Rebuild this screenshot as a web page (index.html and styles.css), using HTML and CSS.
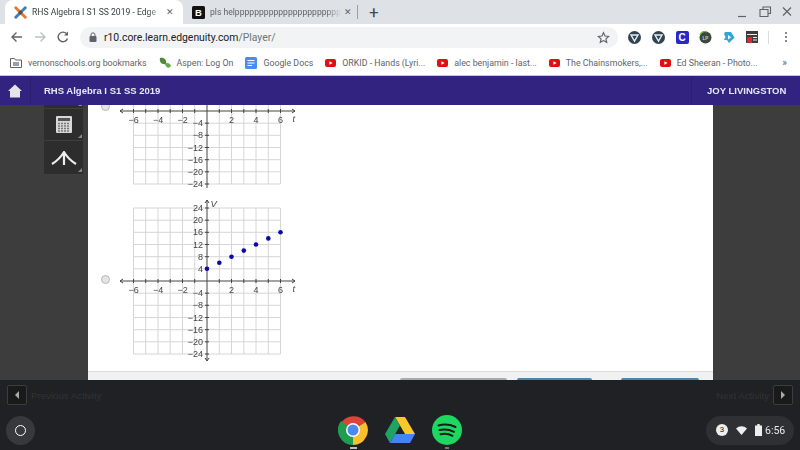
FILE: index.html
```html
<!DOCTYPE html>
<html lang="en">
<head>
    <meta charset="UTF-8" />
    <title>RHS Algebra I S1 SS 2019 - Edgenuity</title>
    <link rel="stylesheet" href="styles.css">
</head>
<body>

<svg class="defs" width="0" height="0">
    <defs>
        <!-- yt bookmark icon -->
        <g id="yt">
            <rect x="0" y="0" width="11" height="8" rx="2" fill="#e01010"/>
            <path d="M4.4 2.2 L7.6 4 L4.4 5.8 Z" fill="#fff"/>
        </g>
        <!-- shield extension icon -->
        <g id="shield">
            <circle cx="6.5" cy="6.5" r="6.5" fill="#2f4450"/>
            <path d="M3 4 H10 L6.5 10 Z" fill="none" stroke="#e8eef0" stroke-width="1.4"/>
        </g>
        <!-- coordinate plane, origin at 0,0 -->
        <g id="plane">
            <path class="grid" d="M-73.5 -73H73.5M-73.5 -60.8H73.5M-73.5 -48.7H73.5M-73.5 -36.5H73.5M-73.5 -24.3H73.5M-73.5 -12.2H73.5M-73.5 12.2H73.5M-73.5 24.3H73.5M-73.5 36.5H73.5M-73.5 48.7H73.5M-73.5 60.8H73.5M-73.5 73H73.5"/>
            <path class="grid" d="M-73.5 -73V73M-61.3 -73V73M-49 -73V73M-36.8 -73V73M-24.5 -73V73M-12.3 -73V73M12.3 -73V73M24.5 -73V73M36.8 -73V73M49 -73V73M61.3 -73V73M73.5 -73V73"/>
            <path class="axis" d="M-87 0H88M0 -81V80"/>
            <path class="axis" d="M-84 -2L-87 0L-84 2M85 -2L88 0L85 2M-2 -78L0 -81L2 -78M-2 77L0 80L2 77"/>
            <path class="axis" d="M-73.5 -2V2M-61.3 -2V2M-49 -2V2M-36.8 -2V2M-24.5 -2V2M-12.3 -2V2M12.3 -2V2M24.5 -2V2M36.8 -2V2M49 -2V2M61.3 -2V2M73.5 -2V2"/>
            <path class="axis" d="M-2 -73H2M-2 -60.8H2M-2 -48.7H2M-2 -36.5H2M-2 -24.3H2M-2 -12.2H2M-2 12.2H2M-2 24.3H2M-2 36.5H2M-2 48.7H2M-2 60.8H2M-2 73H2"/>
            <g class="xnums">
                <text x="-73.5" y="12">−6</text>
                <text x="-49" y="12">−4</text>
                <text x="-24.5" y="12">−2</text>
                <text x="24.5" y="12">2</text>
                <text x="49" y="12">4</text>
                <text x="73.5" y="12">6</text>
            </g>
            <g class="ynums">
                <text x="-4" y="-70">24</text>
                <text x="-4" y="-57.8">20</text>
                <text x="-4" y="-45.7">16</text>
                <text x="-4" y="-33.5">12</text>
                <text x="-4" y="-21.3">8</text>
                <text x="-4" y="-9.2">4</text>
                <text x="-4" y="15.2">−4</text>
                <text x="-4" y="27.3">−8</text>
                <text x="-4" y="39.5">−12</text>
                <text x="-4" y="51.7">−16</text>
                <text x="-4" y="63.8">−20</text>
                <text x="-4" y="76">−24</text>
            </g>
            <text class="varname" x="85.5" y="11">t</text>
            <text class="varname big" x="3.5" y="-74">V</text>
        </g>
    </defs>
</svg>

<div class="tabstrip">
    <div class="tab active">
        <svg class="favicon" width="13" height="13" viewBox="0 0 14 14">
            <path d="M1 1 L13 13" stroke="#e8762c" stroke-width="3"/>
            <path d="M13 1 L1 13" stroke="#3d7fb8" stroke-width="3"/>
            <path d="M4.5 7 L7 4.5 L9.5 7 L7 9.5 Z" fill="#5a4a3a"/>
        </svg>
        <span class="tab-title">RHS Algebra I S1 SS 2019 - Edge</span>
        <span class="tab-x">✕</span>
    </div>
    <div class="tab">
        <svg class="favicon" width="13" height="13" viewBox="0 0 13 13">
            <rect width="13" height="13" rx="1.5" fill="#111"/>
            <text class="b-glyph" x="6.5" y="10">B</text>
        </svg>
        <span class="tab-title">pls helpppppppppppppppppppppp</span>
        <span class="tab-x">✕</span>
    </div>
    <div class="tab-sep"></div>
    <div class="tab-plus">+</div>
    <div class="win-controls">
        <svg width="60" height="14" viewBox="0 0 60 14">
            <path d="M3 11.5 H11" stroke="#5f6368" stroke-width="1.2"/>
            <path d="M25 4.5 H33 V11.5 H25 Z M28 4 V2 H35.5 V8.5 H33" fill="none" stroke="#5f6368" stroke-width="1.1"/>
            <path d="M48 2.5 L56 10.5 M56 2.5 L48 10.5" stroke="#5f6368" stroke-width="1.2"/>
        </svg>
    </div>
</div>

<div class="toolbar">
    <svg class="nav-icon" width="14" height="14" viewBox="0 0 14 14"><path d="M12 7 H2 M6.5 2.5 L2 7 L6.5 11.5" fill="none" stroke="#5f6368" stroke-width="1.4"/></svg>
    <svg class="nav-icon" width="14" height="14" viewBox="0 0 14 14"><path d="M2 7 H12 M7.5 2.5 L12 7 L7.5 11.5" fill="none" stroke="#bdc1c6" stroke-width="1.4"/></svg>
    <svg class="nav-icon" width="14" height="14" viewBox="0 0 14 14"><path d="M11.5 8.5 A4.8 4.8 0 1 1 10.4 3.6" fill="none" stroke="#5f6368" stroke-width="1.4"/><path d="M12 1.5 V5.5 H8 Z" fill="#5f6368"/></svg>
    <div class="omnibox">
        <svg width="8" height="10" viewBox="0 0 8 10"><rect x="0.5" y="4" width="7" height="6" rx="1" fill="#5f6368"/><path d="M2 4.5 V2.8 A2 2 0 0 1 6 2.8 V4.5" fill="none" stroke="#5f6368" stroke-width="1"/></svg>
        <span class="url">r10.core.learn.edgenuity.com<span class="url-path">/Player/</span></span>
        <svg class="star" width="13" height="13" viewBox="0 0 24 24"><path d="M12 3 L14.8 9.2 L21.5 10 L16.5 14.5 L17.9 21 L12 17.7 L6.1 21 L7.5 14.5 L2.5 10 L9.2 9.2 Z" fill="none" stroke="#5f6368" stroke-width="2.2"/></svg>
    </div>
    <div class="extensions">
        <svg width="13" height="13" viewBox="0 0 13 13"><use href="#shield"/></svg>
        <svg width="13" height="13" viewBox="0 0 13 13"><use href="#shield"/></svg>
        <div class="ext-c">C</div>
        <svg width="13" height="13" viewBox="0 0 13 13"><circle cx="6.5" cy="6.5" r="6" fill="#3a4a40"/><path d="M1 4 A6 6 0 0 1 8 .7" fill="none" stroke="#7cb342" stroke-width="1.4"/><text class="lp-glyph" x="6.5" y="8.5">LP</text></svg>
        <svg width="12" height="13" viewBox="0 0 12 13"><path d="M2 1 H8 L11.5 6.5 L6 12 L4 9 H1 L2.5 6 L1 3 Z" fill="#2fa8d8"/><path d="M5 4 L8 6.3 L5 8.5 Z" fill="#fff"/></svg>
        <svg width="12" height="12" viewBox="0 0 12 12"><rect width="12" height="12" fill="#3c3c3c"/><rect x="1" y="6" width="5" height="6" fill="#d92b2b"/><path d="M1 3.5 H11 M7 6.5 H11 M7 9 H11" stroke="#eee" stroke-width="1"/></svg>
    </div>
    <div class="tool-sep"></div>
    <div class="menu-dots"><i></i><i></i><i></i></div>
</div>

<div class="bookmarks">
    <div class="bm">
        <svg width="12" height="10" viewBox="0 0 12 10"><path d="M.5 .5 H4.5 L5.5 2 H11.5 V9.5 H.5 Z" fill="none" stroke="#5f6368" stroke-width="1"/><rect x="3" y="4" width="6" height="4" fill="#9aa0a6"/></svg>
        <span>vernonschools.org bookmarks</span>
    </div>
    <div class="bm">
        <svg width="12" height="12" viewBox="0 0 12 12"><path d="M1 1 C5 0 8 3 7 7 C3 8 0 5 1 1 Z" fill="#4e8a34"/><path d="M6 7 C8 5 11 6 12 9 C10 12 7 11 6 7 Z" fill="#6aa84f"/></svg>
        <span>Aspen: Log On</span>
    </div>
    <div class="bm">
        <svg width="12" height="12" viewBox="0 0 12 12"><rect width="12" height="12" rx="1.5" fill="#4a8cf0"/><path d="M2.5 3.5 H9.5 M2.5 6 H9.5 M2.5 8.5 H7" stroke="#fff" stroke-width="1.1"/></svg>
        <span>Google Docs</span>
    </div>
    <div class="bm">
        <svg width="11" height="8" viewBox="0 0 11 8"><use href="#yt"/></svg>
        <span>ORKID - Hands (Lyri...</span>
    </div>
    <div class="bm">
        <svg width="11" height="8" viewBox="0 0 11 8"><use href="#yt"/></svg>
        <span>alec benjamin - last...</span>
    </div>
    <div class="bm">
        <svg width="11" height="8" viewBox="0 0 11 8"><use href="#yt"/></svg>
        <span>The Chainsmokers,...</span>
    </div>
    <div class="bm">
        <svg width="11" height="8" viewBox="0 0 11 8"><use href="#yt"/></svg>
        <span>Ed Sheeran - Photo...</span>
    </div>
    <div class="bm-more">»</div>
</div>

<div class="course-bar">
    <div class="home-btn">
        <svg width="14" height="14" viewBox="0 0 14 14"><path d="M7 .5 L14 7 H12 V13.5 H2 V7 H0 Z" fill="#e4e4ea"/></svg>
    </div>
    <div class="course-title">RHS Algebra I S1 SS 2019</div>
    <div class="student-name">JOY LIVINGSTON</div>
</div>

<div class="player">
    <div class="side-left">
        <div class="tools">
            <div class="tool-btn tool-first"><i class="corner"></i></div>
            <div class="tool-btn tool-calc">
                <svg width="16" height="17" viewBox="0 0 16 17">
                    <rect width="16" height="17" rx="1" fill="#d8d8d8"/>
                    <rect x="2" y="2" width="12" height="3" fill="#555"/>
                    <path d="M2 7.5 H14 M2 10 H14 M2 12.5 H14 M2 15 H14" stroke="#777" stroke-width="1.4" stroke-dasharray="2 1"/>
                </svg>
                <i class="corner"></i>
            </div>
            <div class="tool-btn tool-arrow">
                <svg width="26" height="14" viewBox="0 0 26 14">
                    <path d="M1 13 C6 10 10 6 13 1 C16 6 20 10 25 13 M13 1 V14" fill="none" stroke="#eee" stroke-width="2.2"/>
                </svg>
                <i class="corner"></i>
            </div>
        </div>
    </div>

    <div class="content">
        <div class="answer answer-cut">
            <div class="radio"></div>
            <svg class="graph" width="200" height="83" viewBox="-99 -6 200 83"><use href="#plane"/></svg>
        </div>
        <div class="answer answer-full">
            <div class="radio"></div>
            <svg class="graph" width="200" height="170" viewBox="-99 -85 200 170">
                <use href="#plane"/>
                <g class="dots">
                    <circle cx="0" cy="-12.2" r="2.3"/>
                    <circle cx="12.3" cy="-18.3" r="2.3"/>
                    <circle cx="24.5" cy="-24.3" r="2.3"/>
                    <circle cx="36.8" cy="-30.4" r="2.3"/>
                    <circle cx="49" cy="-36.5" r="2.3"/>
                    <circle cx="61.3" cy="-42.6" r="2.3"/>
                    <circle cx="73.5" cy="-48.7" r="2.3"/>
                </g>
            </svg>
        </div>
        <div class="btn-row">
            <div class="peek peek-grey"></div>
            <div class="peek peek-blue peek-mid"></div>
            <div class="peek peek-blue peek-last"></div>
        </div>
    </div>

    <div class="side-right"></div>
</div>

<div class="shelf">
    <div class="activity-row">
        <div class="act-btn"><i class="tri-left"></i></div>
        <span class="act-label">Previous Activity</span>
        <span class="act-label act-next">Next Activity</span>
        <div class="act-btn"><i class="tri-right"></i></div>
    </div>
    <div class="launcher-row">
        <div class="launcher-slot"><div class="launcher"><i></i></div></div>
        <div class="apps">
            <div class="app">
                <svg width="30" height="30" viewBox="0 0 30 30">
                    <path d="M15 15 L3 8 A15 15 0 0 1 27.5 7 Z" fill="#dc4437"/>
                    <path d="M15 15 L27.5 7 A15 15 0 0 1 15 30 Z" fill="#fbc02d"/>
                    <path d="M15 15 L15 30 A15 15 0 0 1 3 6 Z" fill="#1f9e50"/>
                    <circle cx="15" cy="15" r="7" fill="#fff"/>
                    <circle cx="15" cy="15" r="5.5" fill="#4b89f0"/>
                </svg>
                <i class="running"></i>
            </div>
            <div class="app">
                <svg width="30" height="28" viewBox="0 0 30 28">
                    <path d="M10 1 H20 L30 18 H20 Z" fill="#f9c82d"/>
                    <path d="M10 1 L15 9.5 L5 27 L0 18 Z" fill="#1fa463"/>
                    <path d="M10 18 H30 L25 27 H5 Z" fill="#4285f4"/>
                </svg>
            </div>
            <div class="app">
                <svg width="30" height="30" viewBox="0 0 30 30">
                    <circle cx="15" cy="15" r="15" fill="#1ed760"/>
                    <path d="M6.5 10.5 C12 9 18 9.5 23.5 12 M7.5 15 C12 14 17.5 14.5 22 16.8 M8.5 19.2 C12.5 18.4 17 18.8 20.5 20.8" fill="none" stroke="#1b1b1b" stroke-width="2" stroke-linecap="round"/>
                </svg>
                <i class="running running-small"></i>
            </div>
        </div>
        <div class="tray-slot">
            <div class="tray">
                <span class="badge">3</span>
                <svg width="11" height="9" viewBox="0 0 11 9"><path d="M0 2.5 A8 8 0 0 1 11 2.5 L5.5 9 Z" fill="#eee"/></svg>
                <svg width="7" height="12" viewBox="0 0 7 12"><path d="M2.3 0 H4.7 V1.5 H7 V12 H0 V1.5 H2.3 Z" fill="#eee"/></svg>
                <span class="clock">6:56</span>
            </div>
        </div>
    </div>
</div>

</body>
</html>
```
FILE: styles.css
```css
* {
    box-sizing: border-box;
}

body {
    margin: 0;
    width: 800px;
    height: 450px;
    overflow: hidden;
    display: flex;
    flex-direction: column;
    font-family: 'Roboto', 'Liberation Sans', sans-serif;
    background-color: #202124;
    filter: blur(0.35px);
}

.defs {
    position: absolute;
}

/* browser tabs */
.tabstrip {
    height: 24px;
    flex: none;
    display: flex;
    align-items: center;
    background-color: #dee1e6;
    padding-left: 5px;
}

.tab {
    width: 178px;
    height: 24px;
    display: flex;
    align-items: center;
    padding: 0 7px 0 9px;
    font-size: 8.6px;
    color: #5f6368;
    flex: none;
}

.tab.active {
    background: white;
    border-radius: 8px 8px 0 0;
    color: #3c4043;
}

.favicon {
    flex: none;
    margin-right: 5px;
}

.b-glyph {
    font: bold 9.5px 'Liberation Sans', sans-serif;
    fill: white;
    text-anchor: middle;
}

.tab-title {
    flex: 1;
    overflow: hidden;
    white-space: nowrap;
    -webkit-mask-image: linear-gradient(to right, #000 88%, transparent);
    mask-image: linear-gradient(to right, #000 88%, transparent);
}

.tab-x {
    font-size: 9px;
    width: 12px;
    text-align: center;
    color: #5f6368;
}

.tab-sep {
    width: 1px;
    height: 14px;
    background-color: #9aa0a6;
    margin-left: -4px;
}

.tab-plus {
    font-size: 17px;
    color: #45494e;
    margin-left: 11px;
}

.win-controls {
    margin-left: auto;
    margin-right: 5px;
    display: flex;
}

/* url row */
.toolbar {
    height: 26px;
    flex: none;
    display: flex;
    align-items: center;
    background: white;
    padding-left: 10px;
}

.nav-icon {
    margin-right: 9px;
    flex: none;
}

.omnibox {
    width: 538px;
    height: 21px;
    margin-left: 1px;
    border-radius: 11px;
    background-color: #f1f3f4;
    display: flex;
    align-items: center;
    padding: 0 8px 0 9px;
}

.url {
    margin-left: 7px;
    font-size: 10.4px;
    color: #202124;
}

.url-path {
    color: #6f7377;
}

.star {
    margin-left: auto;
}

.extensions {
    display: flex;
    align-items: center;
    width: 130px;
    justify-content: space-between;
    margin-left: 10px;
    flex: none;
}

.ext-c {
    width: 13px;
    height: 13px;
    border-radius: 2px;
    background-color: #2a27c4;
    color: white;
    font: bold 10px/13px 'Liberation Sans', sans-serif;
    text-align: center;
}

.lp-glyph {
    font: bold 4.5px 'Liberation Sans', sans-serif;
    fill: #c8d6c0;
    text-anchor: middle;
}

.tool-sep {
    width: 1px;
    height: 13px;
    background-color: #dadce0;
    margin-left: 10px;
    flex: none;
}

.menu-dots {
    margin-left: 16px;
    display: flex;
    flex-direction: column;
    gap: 2px;
}

.menu-dots i {
    width: 2px;
    height: 2px;
    background-color: #5f6368;
    border-radius: 50%;
}

/* bookmarks */
.bookmarks {
    height: 26px;
    flex: none;
    display: flex;
    align-items: center;
    background: white;
    padding-left: 10px;
    font-size: 8.8px;
    color: #5f6368;
    border-bottom: 1px solid #c9c9d4;
}

.bm {
    display: flex;
    align-items: center;
    gap: 6px;
    margin-right: 12px;
    white-space: nowrap;
}

.bm-more {
    margin-left: auto;
    margin-right: 13px;
    font-size: 10px;
}

/* edgenuity header */
.course-bar {
    height: 29px;
    flex: none;
    display: flex;
    align-items: center;
    background-color: #31237f;
    color: #e8e8f2;
    font-family: 'Liberation Sans', Arial, sans-serif;
    font-weight: bold;
    font-size: 9.5px;
}

.home-btn {
    width: 31px;
    height: 100%;
    display: flex;
    align-items: center;
    justify-content: center;
    border-right: 1px solid #2a1e70;
}

.course-title {
    margin-left: 13px;
}

.student-name {
    margin-left: auto;
    height: 100%;
    width: 109px;
    padding-left: 15px;
    line-height: 29px;
    border-left: 1px solid #2a1e70;
}

/* player area */
.player {
    height: 275px;
    flex: none;
    display: flex;
    overflow: hidden;
}

.side-left {
    width: 88px;
    flex: none;
    background-color: #3d3d3d;
    padding-left: 44px;
}

.side-right {
    flex: 1;
    background-color: #3d3d3d;
}

.tools {
    width: 39px;
}

.tool-btn {
    background-color: #2d2d2d;
    border-bottom: 1px solid #3f3f3f;
    display: flex;
    align-items: center;
    justify-content: center;
    position: relative;
}

.tool-first {
    height: 4px;
}

.tool-calc {
    height: 32px;
}

.tool-arrow {
    height: 34px;
}

.corner {
    position: absolute;
    right: 1px;
    bottom: 2px;
    width: 0;
    height: 0;
    border-left: 4px solid transparent;
    border-bottom: 4px solid #8a8a8a;
}

.content {
    width: 625px;
    flex: none;
    background: white;
    display: flex;
    flex-direction: column;
}

.answer {
    display: flex;
    position: relative;
    padding-left: 13px;
}

.answer-cut {
    height: 85px;
    align-items: flex-start;
}

.answer-full {
    align-items: center;
    margin-top: 6px;
    height: 170px;
}

.answer-cut .radio {
    margin-top: -3px;
}

.answer-full .radio {
    margin-top: -4px;
}

.radio {
    width: 9px;
    height: 9px;
    flex: none;
    border-radius: 50%;
    background-color: #e4e4e4;
    border: 1px solid #b9b9b9;
}

.graph {
    flex: none;
    margin-left: -2px;
}

.grid {
    stroke: #d6d6d6;
    stroke-width: 1;
    fill: none;
}

.axis {
    stroke: #444;
    stroke-width: 1;
    fill: none;
}

.xnums text,
.ynums text {
    font-family: 'Liberation Sans', Arial, sans-serif;
    font-size: 9px;
    fill: #444;
}

.xnums text {
    text-anchor: middle;
}

.ynums text {
    text-anchor: end;
}

.varname {
    font-family: 'Liberation Serif', serif;
    font-style: italic;
    font-size: 10px;
    fill: #444;
}

.varname.big {
    font-family: 'Liberation Sans', sans-serif;
    font-size: 9.5px;
}

.dots circle {
    fill: #0a0aa8;
}

.btn-row {
    flex: 1;
    margin-top: 5px;
    background-color: #f1f1f1;
    border-top: 1px solid #dcdcdc;
    display: flex;
    align-items: flex-end;
    padding-left: 312px;
}

.peek {
    height: 2px;
    border-radius: 3px 3px 0 0;
}

.peek-grey {
    width: 107px;
    background-color: #aaa;
}

.peek-blue {
    background-color: #4f86a8;
}

.peek-mid {
    width: 75px;
    margin-left: 10px;
}

.peek-last {
    width: 78px;
    margin-left: 29px;
}

/* chromebook shelf */
.shelf {
    flex: 1;
    display: flex;
    flex-direction: column;
    background-color: #202124;
}

.activity-row {
    height: 30px;
    flex: none;
    display: flex;
    align-items: center;
    padding: 0 7px;
    font-size: 9.7px;
    color: #323336;
    font-family: 'Liberation Sans', Arial, sans-serif;
}

.act-btn {
    width: 20px;
    height: 20px;
    border: 1px solid #3c3d40;
    border-radius: 2px;
    background-color: #1a1a1a;
    display: flex;
    align-items: center;
    justify-content: center;
}

.act-label {
    margin-left: 4px;
}

.act-next {
    margin-left: auto;
    margin-right: 4px;
}

.tri-left {
    border-top: 4px solid transparent;
    border-bottom: 4px solid transparent;
    border-right: 4px solid #aaa;
}

.tri-right {
    border-top: 4px solid transparent;
    border-bottom: 4px solid transparent;
    border-left: 4px solid #aaa;
}

.launcher-row {
    flex: 1;
    display: grid;
    grid-template-columns: 1fr auto 1fr;
    align-items: center;
}

.launcher-slot {
    padding-left: 6px;
}

.launcher {
    width: 29px;
    height: 29px;
    border-radius: 50%;
    background-color: #38393c;
    display: flex;
    align-items: center;
    justify-content: center;
}

.launcher i {
    width: 11px;
    height: 11px;
    border-radius: 50%;
    border: 1.5px solid white;
}

.apps {
    display: flex;
    gap: 17px;
}

.app {
    width: 30px;
    height: 30px;
    display: flex;
    align-items: center;
    justify-content: center;
    position: relative;
}

.running {
    position: absolute;
    left: 12px;
    bottom: -4px;
    width: 7px;
    height: 2px;
    background-color: #bdbdbd;
}

.running-small {
    width: 4px;
    left: 13px;
    background-color: #777;
}

.tray-slot {
    display: flex;
    justify-content: flex-end;
    padding-right: 6px;
}

.tray {
    width: 88px;
    height: 29px;
    border-radius: 15px;
    background-color: #2f3033;
    display: flex;
    align-items: center;
    padding-left: 10px;
    gap: 8px;
    color: #e8eaed;
    font-size: 10.5px;
}

.badge {
    width: 12px;
    height: 12px;
    border-radius: 50%;
    background-color: #eee;
    color: #202124;
    font-size: 8px;
    line-height: 12px;
    text-align: center;
}

.clock {
    margin-left: -5px;
}
```
